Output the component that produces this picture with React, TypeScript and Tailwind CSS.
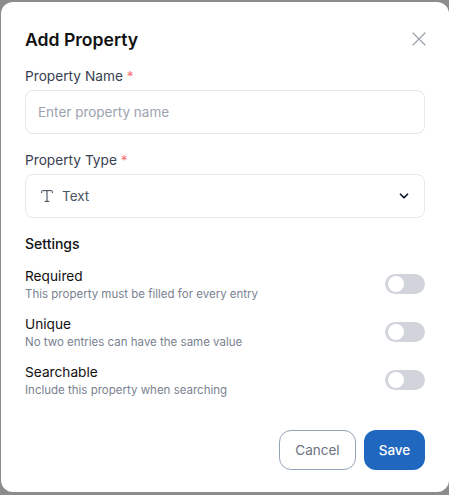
import { ChevronDown, Type, X } from 'lucide-react'

const settings = [
  { name: 'Required', hint: 'This property must be filled for every entry' },
  { name: 'Unique', hint: 'No two entries can have the same value' },
  { name: 'Searchable', hint: 'Include this property when searching' },
]

function Toggle() {
  return (
    <div className="flex items-center w-[40px] h-[20px] rounded-full bg-[#d1d5db] px-[3px]">
      <div className="w-[16px] h-[16px] rounded-full bg-white"></div>
    </div>
  )
}

function App() {
  return (
    <div className="w-[449px] h-[495px] bg-[#8c8c8c] pl-[1px] pt-[2px] overflow-hidden font-['Inter',sans-serif]">
      <div className="w-[448px] h-[490px] bg-white rounded-[12px] pl-[24px] pr-[24px] pt-[24px]">
        <div className="flex items-center justify-between h-[28px]">
          <h2 className="text-[17.6px] leading-[28px] font-semibold text-[#111111]">Add Property</h2>
          <X className="w-[24px] h-[24px] -mr-[6px] -mt-[2px] text-[#9ca3af]" strokeWidth={1.25} />
        </div>

        {/* name */}
        <div className="mt-[12px]">
          <label className="block text-[13.7px] leading-[20px] font-normal text-[#374151]">
            Property Name <span className="text-[#f87171]">*</span>
          </label>
          <input
            className="block mt-[4px] w-[400px] h-[44px] px-[12px] border border-[#e5e7eb] rounded-[8px] text-[13.5px] placeholder:text-[#9ca3af] outline-none"
            placeholder="Enter property name"
          />
        </div>

        {/* type */}
        <div className="mt-[16px]">
          <label className="block text-[13.7px] leading-[20px] font-normal text-[#374151]">
            Property Type <span className="text-[#f87171]">*</span>
          </label>
          <div className="flex items-center justify-between mt-[4px] w-[400px] h-[44px] pl-[13px] pr-[13px] border border-[#e5e7eb] rounded-[8px]">
            <div className="flex items-center gap-[7px] text-[13.5px] text-[#4b5563]">
              <Type className="w-[16px] h-[16px] text-[#374151]" strokeWidth={1.5} />
              <span>Text</span>
            </div>
            <ChevronDown className="w-[14px] h-[14px] text-[#111827]" strokeWidth={3} />
          </div>
        </div>

        {/* settings */}
        <h3 className="mt-[16px] text-[14px] leading-[20px] font-medium text-[#111111]">Settings</h3>
        <div className="mt-[12px] flex flex-col gap-[12px]">
          {settings.map((s) => (
            <div key={s.name} className="flex items-center justify-between h-[36px]">
              <div>
                <div className="text-[13.7px] leading-[20px] font-normal text-[#111111]">{s.name}</div>
                <div className="text-[11.5px] leading-[16px] text-[#7a8290]">{s.hint}</div>
              </div>
              <Toggle />
            </div>
          ))}
        </div>

        <div className="flex justify-end gap-[8px] mt-[32px]">
          <button className="w-[77px] h-[40px] rounded-[12px] border border-[#94a3b8] bg-white text-[13.5px] font-normal text-[#6b7280]">Cancel</button>
          <button className="w-[61px] h-[40px] rounded-[12px] bg-[#2068bf] text-[13.5px] font-medium text-white">Save</button>
        </div>
      </div>
    </div>
  )
}

export default App
